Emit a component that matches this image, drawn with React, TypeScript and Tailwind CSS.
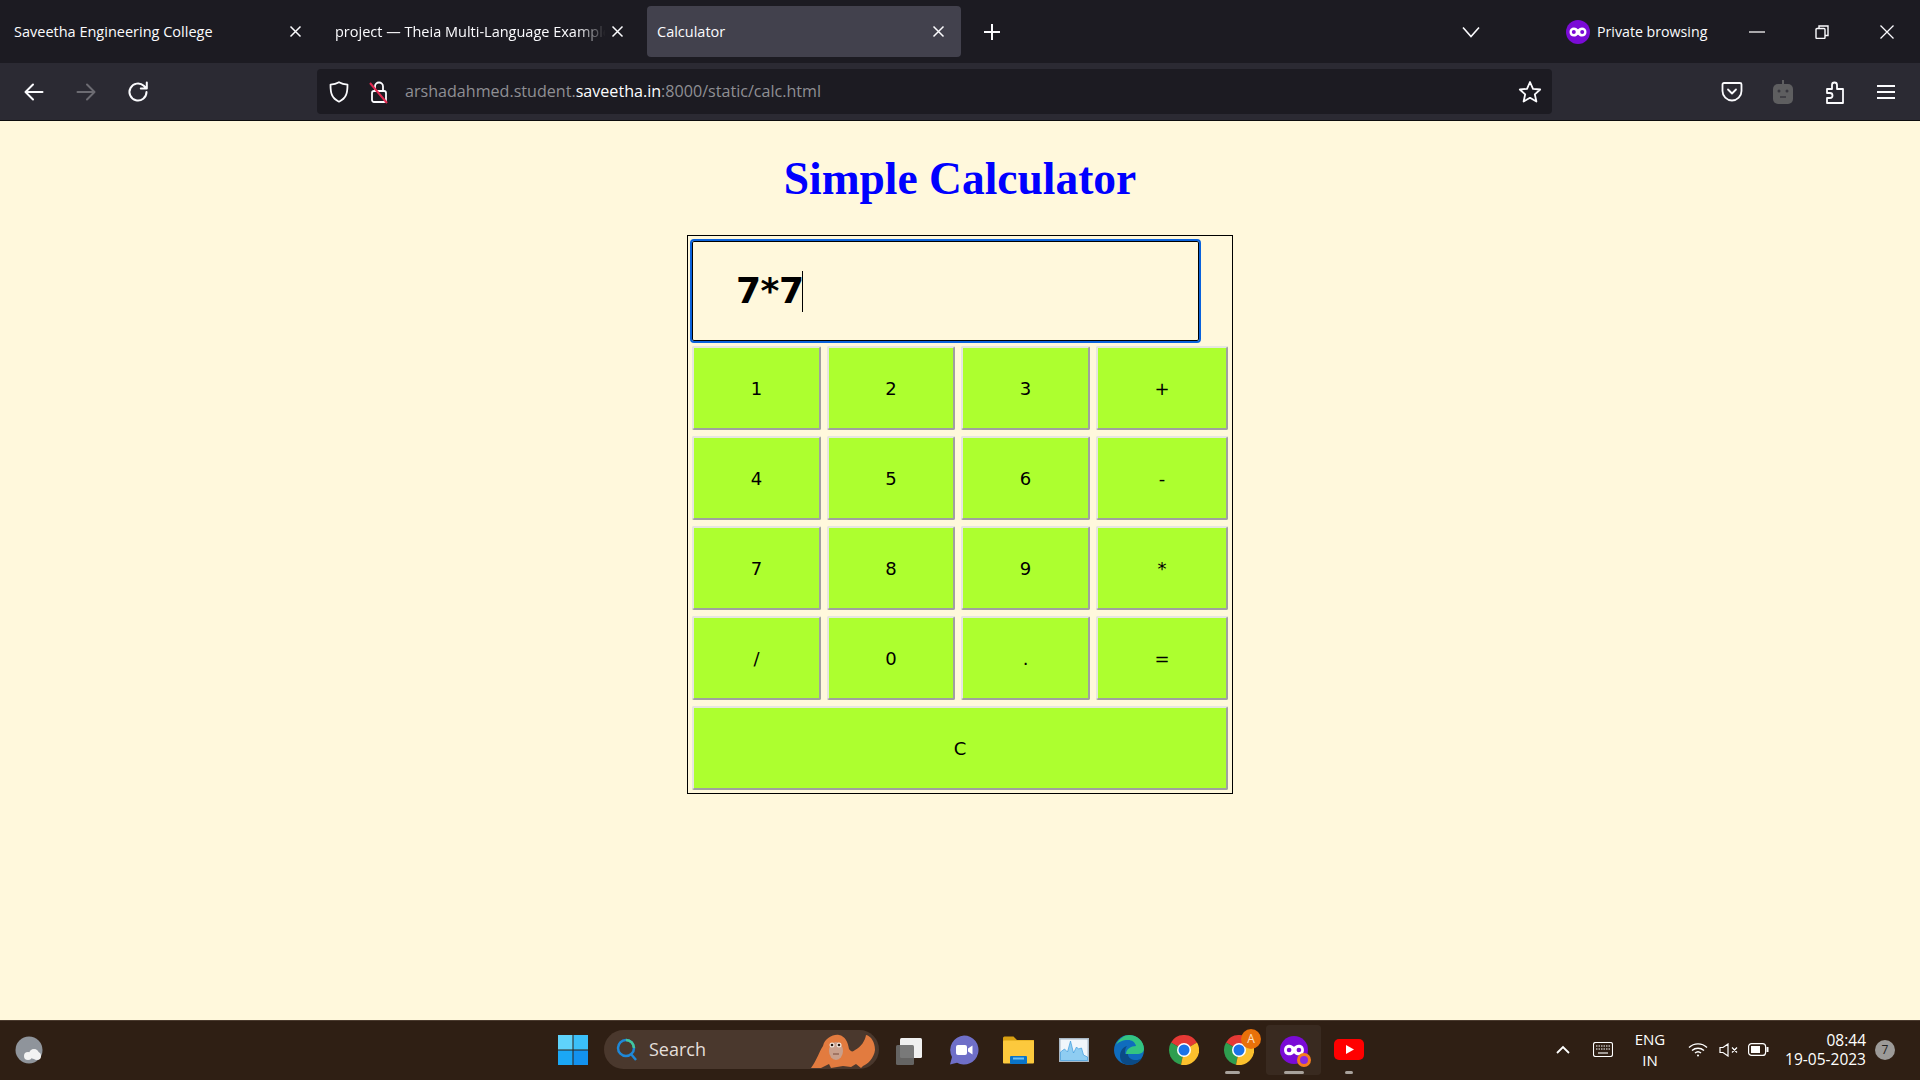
import React from 'react';

const ui = { fontFamily: '"Open Sans", "Noto Sans", sans-serif' };

function CloseX({ size = 13 }: { size?: number }) {
  return (
    <svg className="shrink-0" width={size} height={size} viewBox="0 0 13 13" stroke="#fbfbfe" strokeWidth="1.5" fill="none">
      <path d="M1.5 1.5l10 10M11.5 1.5l-10 10" />
    </svg>
  );
}

function Tab({ title, active, fade, width, pad }: { title: string; active?: boolean; fade?: boolean; width: string; pad: string }) {
  return (
    <div className={`flex items-center h-[51px] rounded-[4px] ${width} ${pad} ${active ? 'bg-[#42414d] pl-[10px]' : 'pl-[14px]'}`}>
      <span className={`flex-1 min-w-0 overflow-hidden whitespace-nowrap text-[14.5px] text-[#fbfbfe] ${fade ? '[mask-image:linear-gradient(to_right,black_88%,transparent_98%)]' : ''}`}>
        {title}
      </span>
      <CloseX />
    </div>
  );
}

function PrivateMask({ size = 24 }: { size?: number }) {
  return (
    <svg width={size} height={size} viewBox="0 0 24 24">
      <circle cx="12" cy="12" r="12" fill="#7a0bd6" />
      <path d="M3.5 12c0-3 2-4.500 4.500-4.500 1.800 0 3 1 4 1.800 1-.8 2.200-1.800 4-1.800 2.500 0 4.500 1.500 4.500 4.500s-2 4.500-4.500 4.500c-1.800 0-3-1-4-1.800-1 .8-2.200 1.800-4 1.800-2.500 0-4.500-1.500-4.500-4.500z" fill="#fff" />
      <circle cx="7.800" cy="12" r="2" fill="#7a0bd6" />
      <circle cx="16.200" cy="12" r="2" fill="#7a0bd6" />
    </svg>
  );
}

function TabBar() {
  return (
    <div className="flex items-center h-[63px] bg-[#1c1b22]">
      <Tab title="Saveetha Engineering College" width="w-[321px]" pad="pr-[19px]" />
      <Tab title="project — Theia Multi-Language Example" fade width="w-[320px]" pad="pr-[17px]" />
      <div className="w-[6px]" />
      <Tab title="Calculator" active width="w-[314px]" pad="pr-[16px]" />
      <svg className="ml-[22px]" width="18" height="18" viewBox="0 0 18 18" stroke="#fbfbfe" strokeWidth="2"><path d="M9 1v16M1 9h16" /></svg>
      <svg className="ml-[461px]" width="18" height="12" viewBox="0 0 18 12" fill="none" stroke="#fbfbfe" strokeWidth="1.600"><path d="M1 1.500l8 9 8-9" /></svg>
      <div className="ml-[86px]"><PrivateMask /></div>
      <span className="ml-[7px] text-[14.2px] text-[#fbfbfe] whitespace-nowrap">Private browsing</span>
      <svg className="ml-[42px]" width="16" height="2" viewBox="0 0 16 2"><path d="M0 1h16" stroke="#d8d8da" strokeWidth="1.500" /></svg>
      <svg className="ml-[50px]" width="14" height="14" viewBox="0 0 14 14" fill="none" stroke="#fbfbfe" strokeWidth="1.400"><rect x="1" y="3.500" width="9" height="10" rx="1" /><path d="M4 3.500V1h9v9.500h-3" /></svg>
      <svg className="ml-[51px]" width="14" height="14" viewBox="0 0 14 14" fill="none" stroke="#fbfbfe" strokeWidth="1.300"><path d="M.5.500l13 13M13.500.500l-13 13" /></svg>
    </div>
  );
}

function ToolBar() {
  const stroke = { fill: 'none', stroke: '#fbfbfe', strokeWidth: 2, strokeLinecap: 'round' as const, strokeLinejoin: 'round' as const };
  return (
    <div className="flex items-center h-[58px] bg-[#2b2a33] border-b border-[#0c0c0d] box-border">
      <svg className="ml-[24px]" width="20" height="20" viewBox="0 0 20 20" {...stroke}><path d="M18.500 10H2M9 2.500L1.500 10 9 17.500" /></svg>
      <svg className="ml-[32px]" width="20" height="20" viewBox="0 0 20 20" {...stroke} stroke="#6c6b72"><path d="M1.500 10H18M11 2.500l7.500 7.500-7.500 7.500" /></svg>
      <svg className="ml-[31px]" width="22" height="22" viewBox="0 0 22 22" {...stroke}><path d="M19.500 11a8.500 8.500 0 1 1-2.700-6.200L19.500 7.500M19.800 1.500v6h-6" /></svg>
      <div className="ml-[168px] flex items-center w-[1235px] h-[45px] rounded-[4px] bg-[#1c1b22] pl-[12px] pr-[10px]">
        <svg width="20" height="22" viewBox="0 0 20 22" fill="none" stroke="#fbfbfe" strokeWidth="1.800" strokeLinejoin="round"><path d="M10 1.200c2.800 1.700 5.500 2.300 8.500 2.500 0 8-1 13.500-8.500 17-7.500-3.500-8.500-9-8.500-17 3-.2 5.700-.8 8.500-2.500z" /></svg>
        <svg className="ml-[20px]" width="20" height="24" viewBox="0 0 20 24" fill="none">
          <path d="M6 11V6.500a4 4 0 0 1 8 0V11" stroke="#fbfbfe" strokeWidth="1.800" />
          <rect x="3" y="11" width="14" height="11" rx="2" stroke="#fbfbfe" strokeWidth="1.800" />
          <path d="M1 3l17 20" stroke="#e22850" strokeWidth="2" />
        </svg>
        <div className="ml-[16px] flex-1 text-[16.1px] whitespace-nowrap text-[#8f8f94]">
          arshadahmed.student.<span className="text-[#fbfbfe]">saveetha.in</span>:8000/static/calc.html
        </div>
        <svg width="24" height="24" viewBox="0 0 24 24" fill="none" stroke="#fbfbfe" strokeWidth="1.800" strokeLinejoin="round"><path d="M12 2l3 6.800 7.200.7-5.400 4.800 1.600 7.200-6.400-3.700-6.400 3.700 1.600-7.200L1.800 9.500 9 8.800z" /></svg>
      </div>
      <svg className="ml-[169px]" width="22" height="22" viewBox="0 0 22 22" fill="none" stroke="#fbfbfe" strokeWidth="1.800" strokeLinejoin="round"><path d="M3 2h16a1.500 1.500 0 0 1 1.500 1.500V10a9.500 9.500 0 0 1-19 0V3.500A1.500 1.500 0 0 1 3 2z" /><path d="M7 8.500l4 4 4-4" strokeLinecap="round" /></svg>
      <svg className="ml-[29px]" width="22" height="24" viewBox="0 0 22 24">
        <path d="M11 0v5" stroke="#5e5e60" strokeWidth="2" />
        <rect x="1" y="4" width="20" height="20" rx="5" fill="#5e5e60" />
        <circle cx="7" cy="11" r="1.500" fill="#38373e" /><circle cx="15" cy="11" r="1.500" fill="#38373e" />
        <path d="M8 17h6" stroke="#38373e" strokeWidth="1.500" />
      </svg>
      <svg className="ml-[31px]" width="20" height="24" viewBox="0 0 20 24" fill="none" stroke="#fbfbfe" strokeWidth="1.800" strokeLinejoin="round"><path d="M2 9h5V5a2.500 2.500 0 0 1 5 0v4h6v14H2v-5h3a2 2 0 0 0 0-5H2z" /></svg>
      <svg className="ml-[32px]" width="18" height="16" viewBox="0 0 18 16" stroke="#fbfbfe" strokeWidth="2"><path d="M0 2h18M0 8h18M0 14h18" /></svg>
    </div>
  );
}

const keys = ['1', '2', '3', '+', '4', '5', '6', '-', '7', '8', '9', '*', '/', '0', '.', '='];

function CalcButton({ label, wide }: { label: string; wide?: boolean }) {
  return (
    <button
      className={`h-[84px] pt-[1px] rounded-[2px] border-2 border-t-[#e6e6e0] border-l-[#e6e6e0] border-r-[#a0a0a0] border-b-[#a0a0a0] bg-[#adff2f] text-[18px] text-black ${wide ? 'col-span-4' : ''}`}
    >
      {label}
    </button>
  );
}

function Calculator() {
  return (
    <div className="flex-1 bg-[#fff8dc] flex flex-col items-center" style={{ fontFamily: '"DejaVu Sans", sans-serif' }}>
      <h1 className="mt-[27px] text-[45.5px] leading-[62px] font-bold text-[#0000ff]" style={{ fontFamily: '"Liberation Serif", serif' }}>
        Simple Calculator
      </h1>
      <div className="mt-[25px] w-[546px] h-[559px] border border-black box-border pl-[2px] pt-[3px]">
        <div className="w-[511px] h-[104px] rounded-[4px] border-2 border-[#0a62dc] shadow-[inset_0_0_0_1px_#000] flex items-center pl-[44px] text-[36px] font-bold text-black">
          <span className="-tracking-[0.5px]">7*7</span>
          <span className="-ml-[1px] w-px h-[41px] bg-black" />
        </div>
        <div className="mt-[3px] ml-[2px] grid grid-cols-[129px_128px_129px_132px] gap-x-[6px] gap-y-[6px]">
          {keys.map((k) => (
            <CalcButton key={k} label={k} />
          ))}
          <CalcButton label="C" wide />
        </div>
      </div>
    </div>
  );
}

function ChromeIcon() {
  return (
    <svg width="30" height="30" viewBox="0 0 30 30">
      <path d="M15 15L2 7.500A15 15 0 0 1 28 7.500z" fill="#e53935" />
      <path d="M15 15L2 7.500A15 15 0 0 0 12 29.700z" fill="#2e9e4f" />
      <path d="M15 15L28 7.500A15 15 0 0 1 12 29.700z" fill="#fbc02d" />
      <circle cx="15" cy="15" r="7" fill="#fff" />
      <circle cx="15" cy="15" r="5.500" fill="#1a73e8" />
    </svg>
  );
}

function TaskIcon({ children, bar, active }: { children: React.ReactNode; bar?: string; active?: boolean }) {
  return (
    <div className={`relative flex items-center justify-center w-[55px] h-[50px] rounded-[4px] ${active ? 'bg-white/5' : ''}`}>
      {children}
      {bar && <span className={`absolute bottom-[1px] h-[3px] rounded-full bg-[#a8a29c] ${bar}`} />}
    </div>
  );
}

function TaskBar() {
  return (
    <div className="flex items-center h-[60px] pb-[2px] bg-[#2f1f14] border-t border-[#4a3a2e] box-border text-white">
      <svg className="ml-[15px]" width="28" height="28" viewBox="0 0 28 28">
        <circle cx="14" cy="14" r="13.500" fill="#8f949b" />
        <circle cx="19" cy="18" r="5" fill="#f3f3f3" /><circle cx="13" cy="20" r="4" fill="#f3f3f3" /><circle cx="22" cy="20" r="4" fill="#f3f3f3" />
      </svg>
      <svg className="ml-[515px]" width="30" height="30" viewBox="0 0 30 30">
        <rect x="0" y="0" width="14.500" height="14.500" fill="#5fd3fb" /><rect x="15.500" y="0" width="14.500" height="14.500" fill="#3bc0fa" />
        <rect x="0" y="15.500" width="14.500" height="14.500" fill="#1ba7f5" /><rect x="15.500" y="15.500" width="14.500" height="14.500" fill="#1392ef" />
      </svg>
      <div className="relative ml-[16px] flex items-center w-[275px] h-[39px] rounded-full bg-[#4a382d] pl-[12px]">
        <svg width="22" height="24" viewBox="0 0 22 24" fill="none" strokeWidth="2.500">
          <circle cx="10" cy="10" r="8" stroke="#1e88d8" />
          <path d="M10 2a8 8 0 0 1 8 8" stroke="#43c79a" />
          <path d="M15 16l5 6" stroke="#1e88d8" />
        </svg>
        <span className="ml-[11px] text-[18px] text-[#e4dfda]" style={ui}>Search</span>
        <svg className="absolute -right-[12px] -top-[8px]" width="90" height="54" viewBox="0 0 90 54">
          <path d="M10 46C16 38 18 30 22 24 24 16 32 12 38 13 44 14 47 20 48 27 50 30 52 30 54 28 60 25 64 19 65 13 70 14 74 20 74 28 73 36 67 42 62 44L60 46 55 42 50 45 42 44 30 46 28 42 20 46z" fill="#e27b3f" />
          <ellipse cx="35" cy="29" rx="7" ry="9" fill="#c99f8b" />
          <circle cx="31" cy="23" r="2.500" fill="#f4e8df" /><circle cx="38" cy="23" r="2.500" fill="#f4e8df" />
          <circle cx="31" cy="23" r="1.300" fill="#2a1a12" /><circle cx="38" cy="23" r="1.300" fill="#2a1a12" />
          <path d="M32 32h6" stroke="#7a4a3a" strokeWidth="1" />
        </svg>
      </div>
      <div className="ml-[2px] flex items-center">
        <TaskIcon>
          <svg width="30" height="30" viewBox="0 0 30 30">
            <rect x="6" y="3" width="22" height="20" rx="1.500" fill="#f0f0f0" />
            <rect x="2" y="10" width="18" height="20" rx="1.500" fill="#6b6b6b" fillOpacity="0.9" />
          </svg>
        </TaskIcon>
        <TaskIcon>
          <svg width="30" height="30" viewBox="0 0 30 30">
            <path d="M15 .5a14.500 14.500 0 1 1-7 27.200L1 29.500l2-7.500A14.500 14.500 0 0 1 15 .5z" fill="#6f6fc8" />
            <rect x="7" y="10" width="11" height="10" rx="2" fill="#fff" />
            <path d="M19 13.500l4.500-3v9l-4.500-3z" fill="#fff" />
          </svg>
        </TaskIcon>
        <TaskIcon>
          <svg width="31" height="28" viewBox="0 0 31 28">
            <path d="M0 2a1.500 1.500 0 0 1 1.500-1.500h9L14 4h17v4H0z" fill="#d9a011" />
            <rect x="0" y="4.500" width="31" height="23" rx="1" fill="#fcc93d" />
            <rect x="7" y="20" width="17" height="8" rx="1" fill="#0a74c8" />
            <rect x="10" y="21.500" width="11" height="2" fill="#6fc0f2" />
          </svg>
        </TaskIcon>
        <TaskIcon>
          <svg width="30" height="24" viewBox="0 0 30 24">
            <rect width="30" height="24" fill="#a9b8c6" />
            <rect x="1.500" y="1.500" width="27" height="21" fill="#f1f6fb" />
            <path d="M1.500 22.500V14l4-3 3 3 3-11 3 12 3-6 2 2 3-1 2 7 4 2v3.500z" fill="#8fcdf2" stroke="#3e9bdc" strokeWidth="0.700" />
          </svg>
        </TaskIcon>
        <TaskIcon>
          <svg width="30" height="30" viewBox="0 0 30 30">
            <circle cx="15" cy="15" r="15" fill="#0f6cbd" />
            <path d="M2 10C5 3 11 0 15 0c8 0 15 6 15 14 0 3-3 5-7 5H12c0-5 5-8 10-8-1-4-4-6-8-6-5 0-10 2-12 5z" fill="#33c481" />
            <path d="M14 19c0 4 4 6 8 6 2 0 4-.5 6-2-2 4-7 7-12 7C9 30 6 26 6 21s3-9 7-10c-2 2-2 5-2 8z" fill="#0b4a86" />
          </svg>
        </TaskIcon>
        <TaskIcon><ChromeIcon /></TaskIcon>
        <TaskIcon bar="w-[15px] left-[14px]">
          <ChromeIcon />
          <span className="absolute right-[5px] top-[4px] flex items-center justify-center w-[20px] h-[20px] rounded-full bg-[#e8710a] text-[12px] text-[#fde3c8]" style={ui}>A</span>
        </TaskIcon>
        <TaskIcon active bar="w-[20px] left-[18px]">
          <div className="relative">
            <PrivateMask size={28} />
            <span className="absolute -right-[3px] -bottom-[3px] w-[14px] h-[14px] rounded-full border-[3px] border-[#f57c1f] bg-[#8a2be2]" />
          </div>
        </TaskIcon>
        <TaskIcon bar="w-[8px] left-[24px]">
          <svg width="30" height="21" viewBox="0 0 30 21">
            <rect width="30" height="21" rx="5" fill="#f00" />
            <path d="M12 6l8 4.500-8 4.500z" fill="#fff" />
          </svg>
        </TaskIcon>
      </div>
      <svg className="ml-[180px]" width="14" height="9" viewBox="0 0 14 9" fill="none" stroke="#fff" strokeWidth="1.800"><path d="M1 8l6-6 6 6" /></svg>
      <svg className="ml-[23px]" width="20" height="15" viewBox="0 0 20 15" fill="none" stroke="#fff" strokeWidth="1.100">
        <rect x=".5" y=".5" width="19" height="14" rx="2" />
        <path d="M3 4h14M3 7h14" strokeDasharray="1.500 1" /><path d="M5 11h10" />
      </svg>
      <div className="ml-[17px] w-[40px] text-center text-[15px] leading-[21px]" style={ui}>ENG<br />IN</div>
      <svg className="ml-[18px]" width="20" height="15" viewBox="0 0 20 15" fill="none" stroke="#fff" strokeWidth="1.400">
        <path d="M1 5.500a13 13 0 0 1 18 0M4 8.500a9 9 0 0 1 12 0M7 11a4.500 4.500 0 0 1 6 0" />
        <circle cx="10" cy="13.500" r="1" fill="#fff" stroke="none" />
      </svg>
      <svg className="ml-[11px]" width="20" height="14" viewBox="0 0 20 14" fill="none" stroke="#fff" strokeWidth="1.200">
        <path d="M1 4.500h3L9 1v12L4 9.500H1zM13 4.500l5 5M18 4.500l-5 5" />
      </svg>
      <svg className="ml-[9px]" width="21" height="13" viewBox="0 0 21 13" fill="none" stroke="#fff" strokeWidth="1.200">
        <rect x=".6" y=".6" width="17" height="11.800" rx="3" />
        <rect x="3" y="3" width="9" height="7" fill="#fff" stroke="none" />
        <rect x="18.500" y="4" width="2" height="5" fill="#fff" stroke="none" />
      </svg>
      <div className="ml-[13px] w-[84px] text-right text-[15.5px] leading-[19px] whitespace-nowrap" style={ui}>08:44<br />19-05-2023</div>
      <span className="ml-[9px] flex items-center justify-center w-[20px] h-[20px] rounded-full bg-[#9c9a98] text-[12px] text-[#222]" style={ui}>7</span>
    </div>
  );
}

export default function App() {
  return (
    <div className="flex flex-col h-[1080px] w-[1920px] overflow-hidden" style={ui}>
      <TabBar />
      <ToolBar />
      <Calculator />
      <TaskBar />
    </div>
  );
}
